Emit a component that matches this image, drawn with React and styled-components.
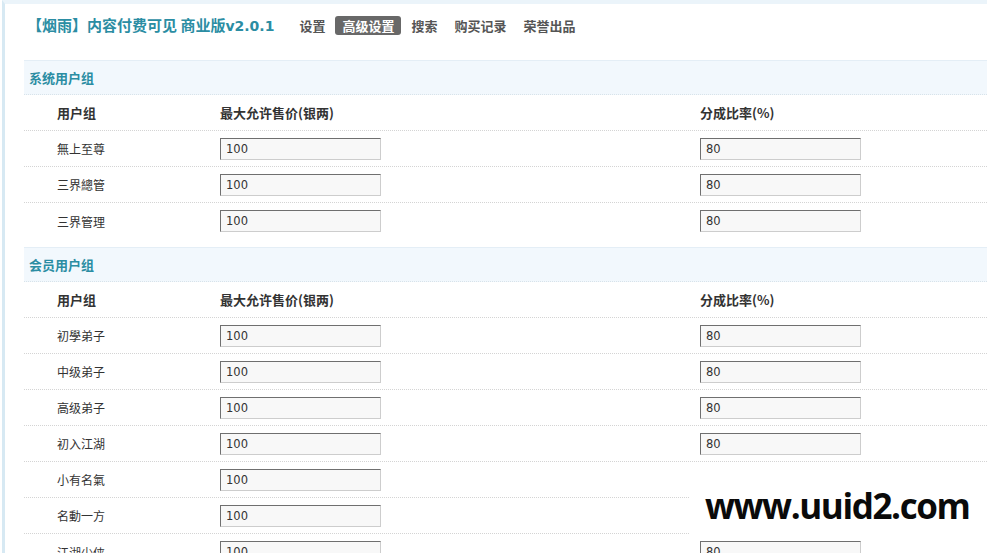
import React from "react";
import styled, { createGlobalStyle, css } from "styled-components";

const GlobalStyle = createGlobalStyle`
  html, body { margin: 0; padding: 0; background: #fff; overflow: hidden; }
  body {
    font-family: "Noto Sans CJK SC", "DejaVu Sans", sans-serif;
    font-size: 12px;
    color: #333;
  }
  * { box-sizing: border-box; }
`;

const Page = styled.div`
  position: relative;
  margin-left: 2px;
  min-height: 553px;
  border-left: 3px solid #d7e9f3;
  border-top: 4px solid #ebf4fa;
  background: #fff;
`;

const Header = styled.div`
  display: flex;
  align-items: center;
  height: 20px;
  margin-top: 11px;
  padding-left: 22px;
`;

const Title = styled.h3`
  margin: 0;
  font-size: 15px;
  font-weight: 700;
  color: #2b8da3;
  line-height: 20px;
  white-space: nowrap;
`;

const Version = styled.span`
  font-family: "DejaVu Sans", sans-serif;
  font-size: 14px;
  font-weight: 700;
`;

const Nav = styled.ul`
  display: flex;
  margin: 0 0 0 18px;
  padding: 0;
  list-style: none;
`;

const Tab = styled.li`
  height: 19px;
  line-height: 19px;
  padding: 0 7px;
  margin-right: 3px;
  font-size: 13px;
  font-weight: 700;
  color: #555;
  border-radius: 3px;
  ${(p) =>
    p.$active &&
    css`
      background: #686868;
      color: #fff;
    `}
`;

const Content = styled.div`
  margin: 25px 0 0 19px;
`;

const Section = styled.section`
  & + & {
    margin-top: 8px;
  }
`;

const SectionTitle = styled.div`
  height: 35px;
  line-height: 33px;
  padding-left: 5px;
  background: #f2f8fd;
  border-top: 1px solid #e4eef6;
  border-bottom: 1px dotted #d8e3ea;
  font-size: 13px;
  font-weight: 700;
  color: #2b8da3;
`;

const Row = styled.div`
  display: grid;
  grid-template-columns: 163px 480px 1fr;
  align-items: center;
  height: 36px;
  padding-left: 33px;
  border-bottom: 1px dotted #d4d4d4;
  &:last-child {
    border-bottom: none;
  }
`;

const HeadCell = styled.div`
  font-size: 13px;
  font-weight: 700;
  color: #333;
`;

const Cell = styled.div`
  font-size: 12px;
  color: #333;
`;

const Input = styled.input`
  display: block;
  width: 161px;
  height: 22px;
  margin: 0;
  padding: 0 5px;
  border: 1px solid;
  border-color: #6f6f6f #cdcdcd #cdcdcd #6f6f6f;
  background: #f8f8f8;
  font-family: "DejaVu Sans", sans-serif;
  font-size: 11.5px;
  color: #333;
  outline: none;
`;

const Watermark = styled.div`
  position: absolute;
  left: 684px;
  top: 459px;
  width: 298px;
  height: 73px;
  padding: 21px 0 0 16px;
  background: #fff;
  font-family: "Open Sans", "DejaVu Sans", sans-serif;
  font-size: 35px;
  font-weight: 700;
  letter-spacing: -1.4px;
  line-height: 44px;
  color: #0a0a0a;
  white-space: nowrap;
`;

const sections = [
  {
    title: "系统用户组",
    rows: ["無上至尊", "三界總管", "三界管理"],
  },
  {
    title: "会员用户组",
    rows: ["初學弟子", "中级弟子", "高级弟子", "初入江湖", "小有名氣", "名動一方", "江湖少侠"],
  },
];

const tabs = ["设置", "高级设置", "搜索", "购买记录", "荣誉出品"];

export default function App() {
  return (
    <>
      <GlobalStyle />
      <Page>
        <Header>
          <Title>
            【烟雨】内容付费可见 商业版<Version>v2.0.1</Version>
          </Title>
          <Nav>
            {tabs.map((t) => (
              <Tab key={t} $active={t === "高级设置"}>
                {t}
              </Tab>
            ))}
          </Nav>
        </Header>
        <Content>
          {sections.map((s) => (
            <Section key={s.title}>
              <SectionTitle>{s.title}</SectionTitle>
              <div>
                <Row>
                  <HeadCell>用户组</HeadCell>
                  <HeadCell>最大允许售价(银两)</HeadCell>
                  <HeadCell>分成比率(%)</HeadCell>
                </Row>
                {s.rows.map((r) => (
                  <Row key={r}>
                    <Cell>{r}</Cell>
                    <Cell>
                      <Input defaultValue="100" />
                    </Cell>
                    <Cell>
                      <Input defaultValue="80" />
                    </Cell>
                  </Row>
                ))}
              </div>
            </Section>
          ))}
        </Content>
        <Watermark>www.uuid2.com</Watermark>
      </Page>
    </>
  );
}
